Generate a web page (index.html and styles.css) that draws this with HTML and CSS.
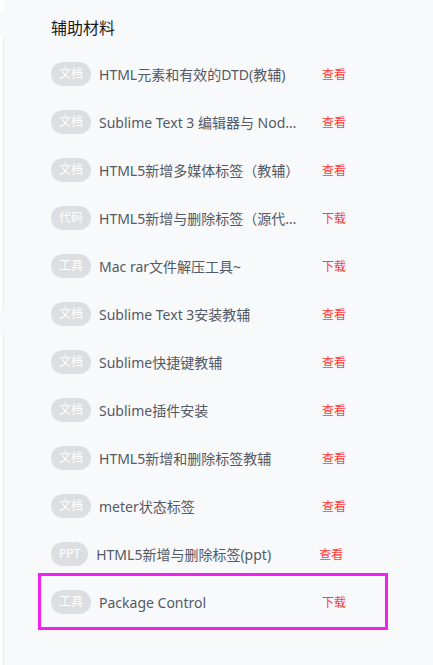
FILE: index.html
```html
<!DOCTYPE html>
<html lang="zh-CN">
<head>
<meta charset="utf-8">
<title>辅助材料</title>
<link rel="stylesheet" href="styles.css">
</head>
<body>
<div class="page">
  <aside class="rail">
    <div class="rail-top"></div>
    <div class="rail-panel"></div>
    <div class="rail-rest"></div>
  </aside>
  <main class="content">
    <h2 class="heading">辅助材料</h2>
    <ul class="list">
      <li class="item"><span class="tag">文档</span><span class="name">HTML元素和有效的DTD(教辅)</span><a class="act">查看</a></li>
      <li class="item"><span class="tag">文档</span><span class="name">Sublime Text 3 编辑器与 Node.js 的配置</span><a class="act">查看</a></li>
      <li class="item"><span class="tag">文档</span><span class="name">HTML5新增多媒体标签（教辅）</span><a class="act">查看</a></li>
      <li class="item"><span class="tag">代码</span><span class="name">HTML5新增与删除标签（源代码）</span><a class="act">下载</a></li>
      <li class="item"><span class="tag">工具</span><span class="name">Mac rar文件解压工具~</span><a class="act">下载</a></li>
      <li class="item"><span class="tag">文档</span><span class="name">Sublime Text 3安装教辅</span><a class="act">查看</a></li>
      <li class="item"><span class="tag">文档</span><span class="name">Sublime快捷键教辅</span><a class="act">查看</a></li>
      <li class="item"><span class="tag">文档</span><span class="name">Sublime插件安装</span><a class="act">查看</a></li>
      <li class="item"><span class="tag">文档</span><span class="name">HTML5新增和删除标签教辅</span><a class="act">查看</a></li>
      <li class="item"><span class="tag">文档</span><span class="name">meter状态标签</span><a class="act">查看</a></li>
      <li class="item"><span class="tag">PPT</span><span class="name">HTML5新增与删除标签(ppt)</span><a class="act">查看</a></li>
      <li class="item selected"><span class="tag">工具</span><span class="name">Package Control</span><a class="act">下载</a></li>
    </ul>
  </main>
</div>
</body>
</html>
```
FILE: styles.css
```css
html, body {
  margin: 0;
  padding: 0;
  background: #f8f9fb;
}
body {
  font-family: "Noto Sans", "Noto Sans CJK SC", sans-serif;
  height: 665px;
  overflow: hidden;
}
.page {
  display: flex;
  min-height: 665px;
}
.rail {
  width: 4px;
  flex: none;
  display: flex;
  flex-direction: column;
}
.rail-top {
  height: 13px;
  background: #ffffff;
  border-bottom-right-radius: 4px;
}
.rail-panel {
  margin-top: 22px;
  height: 277px;
  background: #ffffff;
  border-right: 1px solid #ececef;
  border-radius: 0 5px 5px 0;
}
.rail-rest {
  margin-top: 21px;
  flex: 1;
  background: #ffffff;
  border-right: 1px solid #ececef;
  border-top-right-radius: 5px;
}
.content {
  padding-left: 47px;
  flex: 1;
}
.heading {
  margin: 16px 0 0;
  font-size: 16px;
  line-height: 24px;
  font-weight: 400;
  color: #1b1b1b;
}
.list {
  list-style: none;
  margin: 10px 0 0;
  padding: 0;
}
.item {
  display: flex;
  align-items: center;
  height: 48px;
  width: 334px;
}
.tag {
  flex: none;
  height: 24px;
  line-height: 24px;
  padding: 0 8px;
  border-radius: 12px;
  background: #dcdee2;
  color: #ffffff;
  font-size: 12px;
}
.name {
  margin-left: 8px;
  width: 205px;
  margin-right: 18px;
  font-size: 14px;
  color: #535965;
  white-space: nowrap;
  overflow: hidden;
  text-overflow: ellipsis;
}
.act {
  font-size: 12px;
  color: #ff3b3b;
  cursor: pointer;
}
.selected {
  position: relative;
}
.selected::after {
  content: "";
  position: absolute;
  left: -13px;
  right: -3px;
  top: -5px;
  bottom: -4px;
  border: 3px solid #f321f0;
}
```
